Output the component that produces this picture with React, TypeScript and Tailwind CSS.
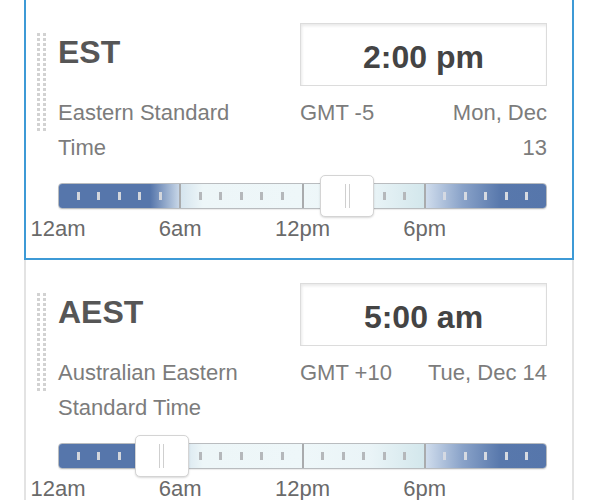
import React from "react";

type Zone = {
  abbr: string;
  name: string;
  time: string;
  gmt: string;
  date: string;
  hour: number;
  active?: boolean;
};

const zones: Zone[] = [
  { abbr: "EST", name: "Eastern Standard Time", time: "2:00 pm", gmt: "GMT -5", date: "Mon, Dec 13", hour: 14.2, active: true },
  { abbr: "AEST", name: "Australian Eastern Standard Time", time: "5:00 am", gmt: "GMT +10", date: "Tue, Dec 14", hour: 5.08 },
];

const TRACK_W = 489;

function Grip() {
  return (
    <div className="grid grid-cols-2 gap-x-[3px] gap-y-[2px] w-[9px] mt-[32px] self-start">
      {Array.from({ length: 40 }).map((_, i) => (
        <div key={i} className="w-[3px] h-[3px] bg-[#d2d2d2]" />
      ))}
    </div>
  );
}

function Ticks({ dark }: { dark: "dark" | "light" | "mixed" }) {
  return (
    <div className="flex h-full items-center justify-evenly">
      {[0, 1, 2, 3, 4].map((i) => {
        let cls = "bg-[#b5b8bb]";
        if (dark === "dark") cls = "bg-[#d3d6dc]";
        if (dark === "mixed") cls = i < 1 ? "bg-[#d4d9e2]" : "bg-[#d6dae1]";
        return <div key={i} className={`w-[3px] h-[8px] ${cls}`} />;
      })}
    </div>
  );
}

function Slider({ hour }: { hour: number }) {
  const left = (hour / 24) * TRACK_W - 27;
  return (
    <div className="relative mt-[18px] w-[489px]">
      <div className="flex h-[26px] w-full overflow-hidden rounded-[4px] border border-[#b9bcbf] shadow-[0_1px_1px_rgba(0,0,0,0.08)]">
        <div className="flex-1 bg-[linear-gradient(to_right,#5676ab_0%,#5676ab_76%,#c7d6e7_100%)]">
          <Ticks dark="dark" />
        </div>
        <div className="flex-1 border-l-2 border-[#a9abad] bg-[linear-gradient(to_right,#d5e4ee_0%,#edf6f8_18%,#eef7f9_100%)]">
          <Ticks dark="light" />
        </div>
        <div className="flex-1 border-l-2 border-[#a9abad] bg-[linear-gradient(to_right,#eef7f9_0%,#eaf4f7_55%,#d3e7ec_100%)]">
          <Ticks dark="light" />
        </div>
        <div className="flex-1 border-l-2 border-[#a9abad] bg-[linear-gradient(to_right,#cfdcec_0%,#8aa3c9_30%,#5878ac_62%,#5676ab_100%)]">
          <Ticks dark="mixed" />
        </div>
      </div>
      <div
        className="absolute top-[-8px] flex h-[42px] w-[54px] items-center justify-center gap-[3px] rounded-[5px] border border-[#d4d4d4] bg-white shadow-[0_1px_2px_rgba(0,0,0,0.15)]"
        style={{ left }}
      >
        <div className="h-[24px] w-px bg-[#cfcfcf]" />
        <div className="h-[24px] w-px bg-[#cfcfcf]" />
      </div>
    </div>
  );
}

function Card({ z, first }: { z: Zone; first: boolean }) {
  return (
    <div
      className={
        first
          ? "flex border-x-2 border-b-2 border-t-0 border-[#3d9ad6] pl-[11px] pr-[25px] pt-px pb-[16px]"
          : "flex border-x-2 border-t-0 border-[#e3e3e3] pl-[11px] pr-[25px] pt-px pb-[16px]"
      }
    >
      <Grip />
      <div className="ml-[12px] flex flex-col w-[489px]">
        <div className="flex">
          <div className="flex flex-col w-[200px] pt-[33px]">
            <div className="text-[32px] leading-[36px] font-bold text-[#565656]">{z.abbr}</div>
            <div className="mt-[25px] text-[22px] leading-[35px] text-[#7c7c7c]">{z.name}</div>
          </div>
          <div className="flex-1" />
          <div className="flex flex-col w-[247px] pt-[22px]">
            <div className="flex h-[63px] items-center justify-center border border-[#dcdcdc] bg-white shadow-[inset_1px_2px_3px_rgba(0,0,0,0.09)]">
              <span className="translate-y-[2px] text-[32px] leading-none font-bold text-[#444444]">{z.time}</span>
            </div>
            <div className="mt-[9px] flex justify-between text-[22px] leading-[35px] text-[#7c7c7c]">
              <span>{z.gmt}</span>
              <span className="w-[122px] text-right">{z.date}</span>
            </div>
          </div>
        </div>
        <Slider hour={z.hour} />
        <div className="mt-[7px] grid grid-cols-4 text-[22px] leading-[26px] text-[#6a6a6a]">
          {["12am", "6am", "12pm", "6pm"].map((l) => (
            <div key={l}>
              <span className="inline-block -translate-x-1/2">{l}</span>
            </div>
          ))}
        </div>
      </div>
    </div>
  );
}

export default function App() {
  return (
    <div className="w-[597px] h-[500px] overflow-hidden bg-white font-['Liberation_Sans',Arial,sans-serif]">
      <div className="ml-[24px] w-[550px]">
        {zones.map((z, i) => (
          <Card key={z.abbr} z={z} first={i === 0} />
        ))}
      </div>
    </div>
  );
}
